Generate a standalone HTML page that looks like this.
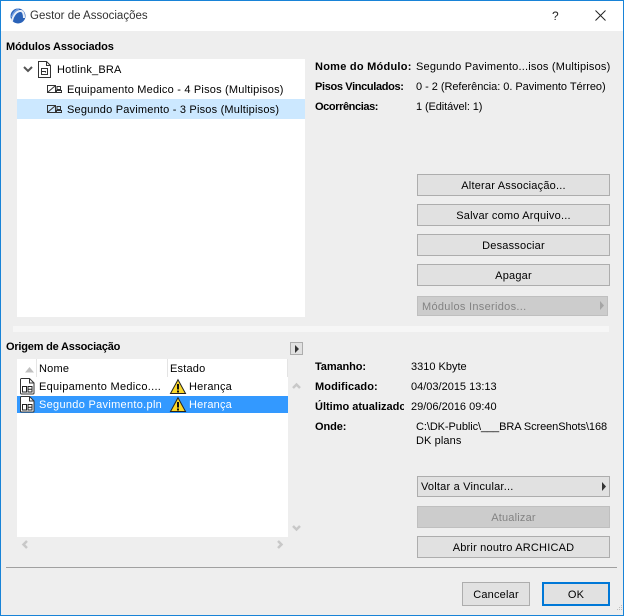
<!DOCTYPE html>
<html><head><meta charset="utf-8"><style>
html,body{margin:0;padding:0;width:624px;height:616px;overflow:hidden;background:#eee}
body{position:relative;font-family:"Liberation Sans",sans-serif;font-size:11px;color:#000}
.a,.t,.b{position:absolute;box-sizing:border-box}
.t{white-space:nowrap;line-height:16px;letter-spacing:.2px}
.h{font-weight:bold;letter-spacing:0}
.b{background:#e1e1e1;border:1px solid #adadad;text-align:center;line-height:22px;white-space:nowrap;letter-spacing:.2px;height:22px;left:417px;width:193px}
.d{background:#ccc;border-color:#bfbfbf;color:#838383}
svg{position:absolute;overflow:visible}
</style></head><body>
<div class="a" style="left:0;top:0;width:624px;height:31px;background:#fff"></div>
<div class="a" style="left:0;top:0;width:624px;height:616px;border:1px solid #1883d7"></div>
<svg style="left:10px;top:8px" width="16" height="16" viewBox="0 0 16 16"><circle cx="8" cy="8" r="7.500" fill="#2a62b8"/><path d="M2 13C3 7 7 2.500 11 3c2 .4 3 3 3 7" fill="none" stroke="#e8eef8" stroke-width="2"/><path d="M1.500 9C3 5 6 1.500 9 1" fill="none" stroke="#6f9be0" stroke-width="1.500"/></svg>
<div class="t" style="left:30px;top:8px;font-size:11.500px;color:#333;letter-spacing:0">Gestor de Associações</div>
<div class="t" style="left:552px;top:8px;font-size:12px;color:#222">?</div>
<svg style="left:595px;top:10px" width="11" height="11"><path d="M.5.500l10 10M10.500.500l-10 10" stroke="#222" fill="none"/></svg>

<div class="t h" style="left:6px;top:39px;letter-spacing:-.1px">Módulos Associados</div>
<div class="a" style="left:17px;top:59px;width:288px;height:258px;background:#fff"></div>
<div class="a" style="left:17px;top:99px;width:288px;height:20px;background:#cce8ff"></div>
<svg style="left:23px;top:66px" width="10" height="7"><path d="M1 1l4 4 4-4" fill="none" stroke="#555" stroke-width="2"/></svg>
<svg style="left:38px;top:61px" width="13" height="17"><path d="M.5.500h8l4 4v12h-12z" fill="#fff" stroke="#333"/><path d="M8.500.500v4h4" fill="none" stroke="#333"/><path d="M3.500 7.500h6v6h-6zM3.500 10.500h4v1" fill="none" stroke="#333"/></svg>
<div class="t" style="left:57px;top:62px">Hotlink_BRA</div>
<svg style="left:47px;top:85px" width="15" height="9"><path d="M.5.500h8v7h-8zM1 7l7-6" fill="none" stroke="#333"/><path d="M10 1.500h3.500v3h-3.500zM9.500 7.500v-2h5v2z" fill="none" stroke="#333"/></svg>
<div class="t" style="left:67px;top:82px">Equipamento Medico - 4 Pisos (Multipisos)</div>
<svg style="left:47px;top:105px" width="15" height="9"><path d="M.5.500h8v7h-8zM1 7l7-6" fill="none" stroke="#333"/><path d="M10 1.500h3.500v3h-3.500zM9.500 7.500v-2h5v2z" fill="none" stroke="#333"/></svg>
<div class="t" style="left:67px;top:102px">Segundo Pavimento - 3 Pisos (Multipisos)</div>

<div class="t h" style="left:315px;top:59px;letter-spacing:.25px">Nome do Módulo:</div>
<div class="t" style="left:416px;top:59px">Segundo Pavimento...isos (Multipisos)</div>
<div class="t h" style="left:315px;top:79px;letter-spacing:-.35px">Pisos Vinculados:</div>
<div class="t" style="left:416px;top:79px;letter-spacing:-.04px">0 - 2 (Referência: 0. Pavimento Térreo)</div>
<div class="t h" style="left:315px;top:99px;letter-spacing:-.4px">Ocorrências:</div>
<div class="t" style="left:416px;top:99px;letter-spacing:-.1px">1 (Editável: 1)</div>

<div class="b" style="top:174px">Alterar Associação...</div>
<div class="b" style="top:204px">Salvar como Arquivo...</div>
<div class="b" style="top:234px">Desassociar</div>
<div class="b" style="top:264px">Apagar</div>
<div class="b d" style="top:296px;width:191px;height:20px;text-align:left;padding-left:4px;line-height:20px;letter-spacing:.3px">Módulos Inseridos...</div>
<svg style="left:600px;top:301px" width="5" height="9"><path d="M0 0l4 4.500-4 4.500z" fill="#a5a5a5"/></svg>
<div class="a" style="left:13px;top:326px;width:596px;height:6px;background:#f6f6f6"></div>

<div class="t h" style="left:6px;top:339px;letter-spacing:-.2px">Origem de Associação</div>
<div class="a" style="left:290px;top:342px;width:13px;height:13px;background:#e1e1e1;border:1px solid #adadad"></div>
<svg style="left:295px;top:345px" width="5" height="8"><path d="M0 0l4 4-4 4z" fill="#333"/></svg>

<div class="a" style="left:17px;top:359px;width:271px;height:178px;background:#fff"></div>
<div class="a" style="left:36px;top:359px;width:1px;height:18px;background:#e4e4e4"></div>
<div class="a" style="left:167px;top:359px;width:1px;height:18px;background:#e4e4e4"></div>
<div class="a" style="left:287px;top:359px;width:1px;height:18px;background:#e4e4e4"></div>
<svg style="left:25px;top:367px" width="10" height="6"><path d="M0 5.500L4.500 0 9 5.500z" fill="#c0c0c0"/></svg>
<div class="t" style="left:39px;top:361px">Nome</div>
<div class="t" style="left:170px;top:361px">Estado</div>
<div class="a" style="left:17px;top:396px;width:271px;height:17px;background:#3399ff"></div>
<svg style="left:20px;top:378px" width="15" height="17"><path d="M1.500.500h8l4.500 4.500v10a1 1 0 0 1-1 1h-11.500a1 1 0 0 1-1-1v-13.500a1 1 0 0 1 1-1z" fill="#fff" stroke="#333"/><path d="M9.500.500v4.500h4.500" fill="none" stroke="#333"/><path d="M2.500 8.500h4v5.500h-4zM8 8.500h4v5.500h-4zM8 11.200h4" fill="none" stroke="#222"/></svg>
<svg style="left:20px;top:396px" width="15" height="17"><path d="M1.500.500h8l4.500 4.500v10a1 1 0 0 1-1 1h-11.500a1 1 0 0 1-1-1v-13.500a1 1 0 0 1 1-1z" fill="#fff" stroke="#333"/><path d="M9.500.500v4.500h4.500" fill="none" stroke="#333"/><path d="M2.500 8.500h4v5.500h-4zM8 8.500h4v5.500h-4zM8 11.200h4" fill="none" stroke="#222"/></svg>
<div class="t" style="left:39px;top:379px;letter-spacing:.3px">Equipamento Medico....</div>
<div class="t" style="left:39px;top:397px;color:#fff;letter-spacing:.3px">Segundo Pavimento.pln</div>
<svg style="left:170px;top:379px" width="16" height="15"><path d="M8 .700L15.500 14.500H.5z" fill="#fbd82a" stroke="#222"/><path d="M8 5v5.500M8 11.500v2" stroke="#111" stroke-width="2"/></svg>
<svg style="left:170px;top:397px" width="16" height="15"><path d="M8 .700L15.500 14.500H.5z" fill="#fbd82a" stroke="#222"/><path d="M8 5v5.500M8 11.500v2" stroke="#111" stroke-width="2"/></svg>
<div class="t" style="left:189px;top:379px">Herança</div>
<div class="t" style="left:189px;top:397px;color:#fff">Herança</div>
<svg style="left:292px;top:383px" width="9" height="6"><path d="M1 5l3.500-3.500L8 5" fill="none" stroke="#c8c8c8" stroke-width="2.500"/></svg>
<svg style="left:292px;top:525px" width="9" height="6"><path d="M1 1l3.500 3.500L8 1" fill="none" stroke="#c8c8c8" stroke-width="2.500"/></svg>
<svg style="left:22px;top:540px" width="6" height="9"><path d="M5 1L1.500 4.500 5 8" fill="none" stroke="#c8c8c8" stroke-width="2.500"/></svg>
<svg style="left:277px;top:540px" width="6" height="9"><path d="M1 1l3.500 3.500L1 8" fill="none" stroke="#c8c8c8" stroke-width="2.500"/></svg>

<div class="t h" style="left:315px;top:359px;letter-spacing:-.1px">Tamanho:</div>
<div class="t" style="left:411px;top:359px;letter-spacing:0">3310 Kbyte</div>
<div class="t h" style="left:315px;top:379px;letter-spacing:.1px">Modificado:</div>
<div class="t" style="left:411px;top:379px;letter-spacing:0">04/03/2015 13:13</div>
<div class="t h" style="left:315px;top:399px;width:89px;overflow:hidden">Último atualizado</div>
<div class="t" style="left:411px;top:399px;letter-spacing:0">29/06/2016 09:40</div>
<div class="t h" style="left:315px;top:419px;letter-spacing:-.1px">Onde:</div>
<div class="t" style="left:416px;top:419px;letter-spacing:-.08px">C:\DK-Public\___BRA ScreenShots\168</div>
<div class="t" style="left:416px;top:433px;letter-spacing:.1px">DK plans</div>

<div class="b" style="top:476px;height:21px;text-align:left;padding-left:3px;line-height:20px">Voltar a Vincular...</div>
<svg style="left:602px;top:482px" width="5" height="9"><path d="M0 0l4 4.500-4 4.500z" fill="#333"/></svg>
<div class="b d" style="top:506px">Atualizar</div>
<div class="b" style="top:536px">Abrir noutro ARCHICAD</div>
<div class="a" style="left:6px;top:567px;width:611px;height:1px;background:#a0a0a0"></div>
<div class="b" style="left:462px;top:582px;width:68px;height:24px;line-height:24px">Cancelar</div>
<div class="b" style="left:542px;top:582px;width:68px;height:24px;line-height:22px;border:2px solid #0078d7">OK</div>
<svg style="left:616px;top:604px" width="7" height="9"><path d="M5 1h1v1h-1zM3 3h1v1h-1zM5 3h1v1h-1zM1 5h1v1h-1zM3 5h1v1h-1zM5 5h1v1h-1z" fill="#bdbdbd"/></svg>
</body></html>
